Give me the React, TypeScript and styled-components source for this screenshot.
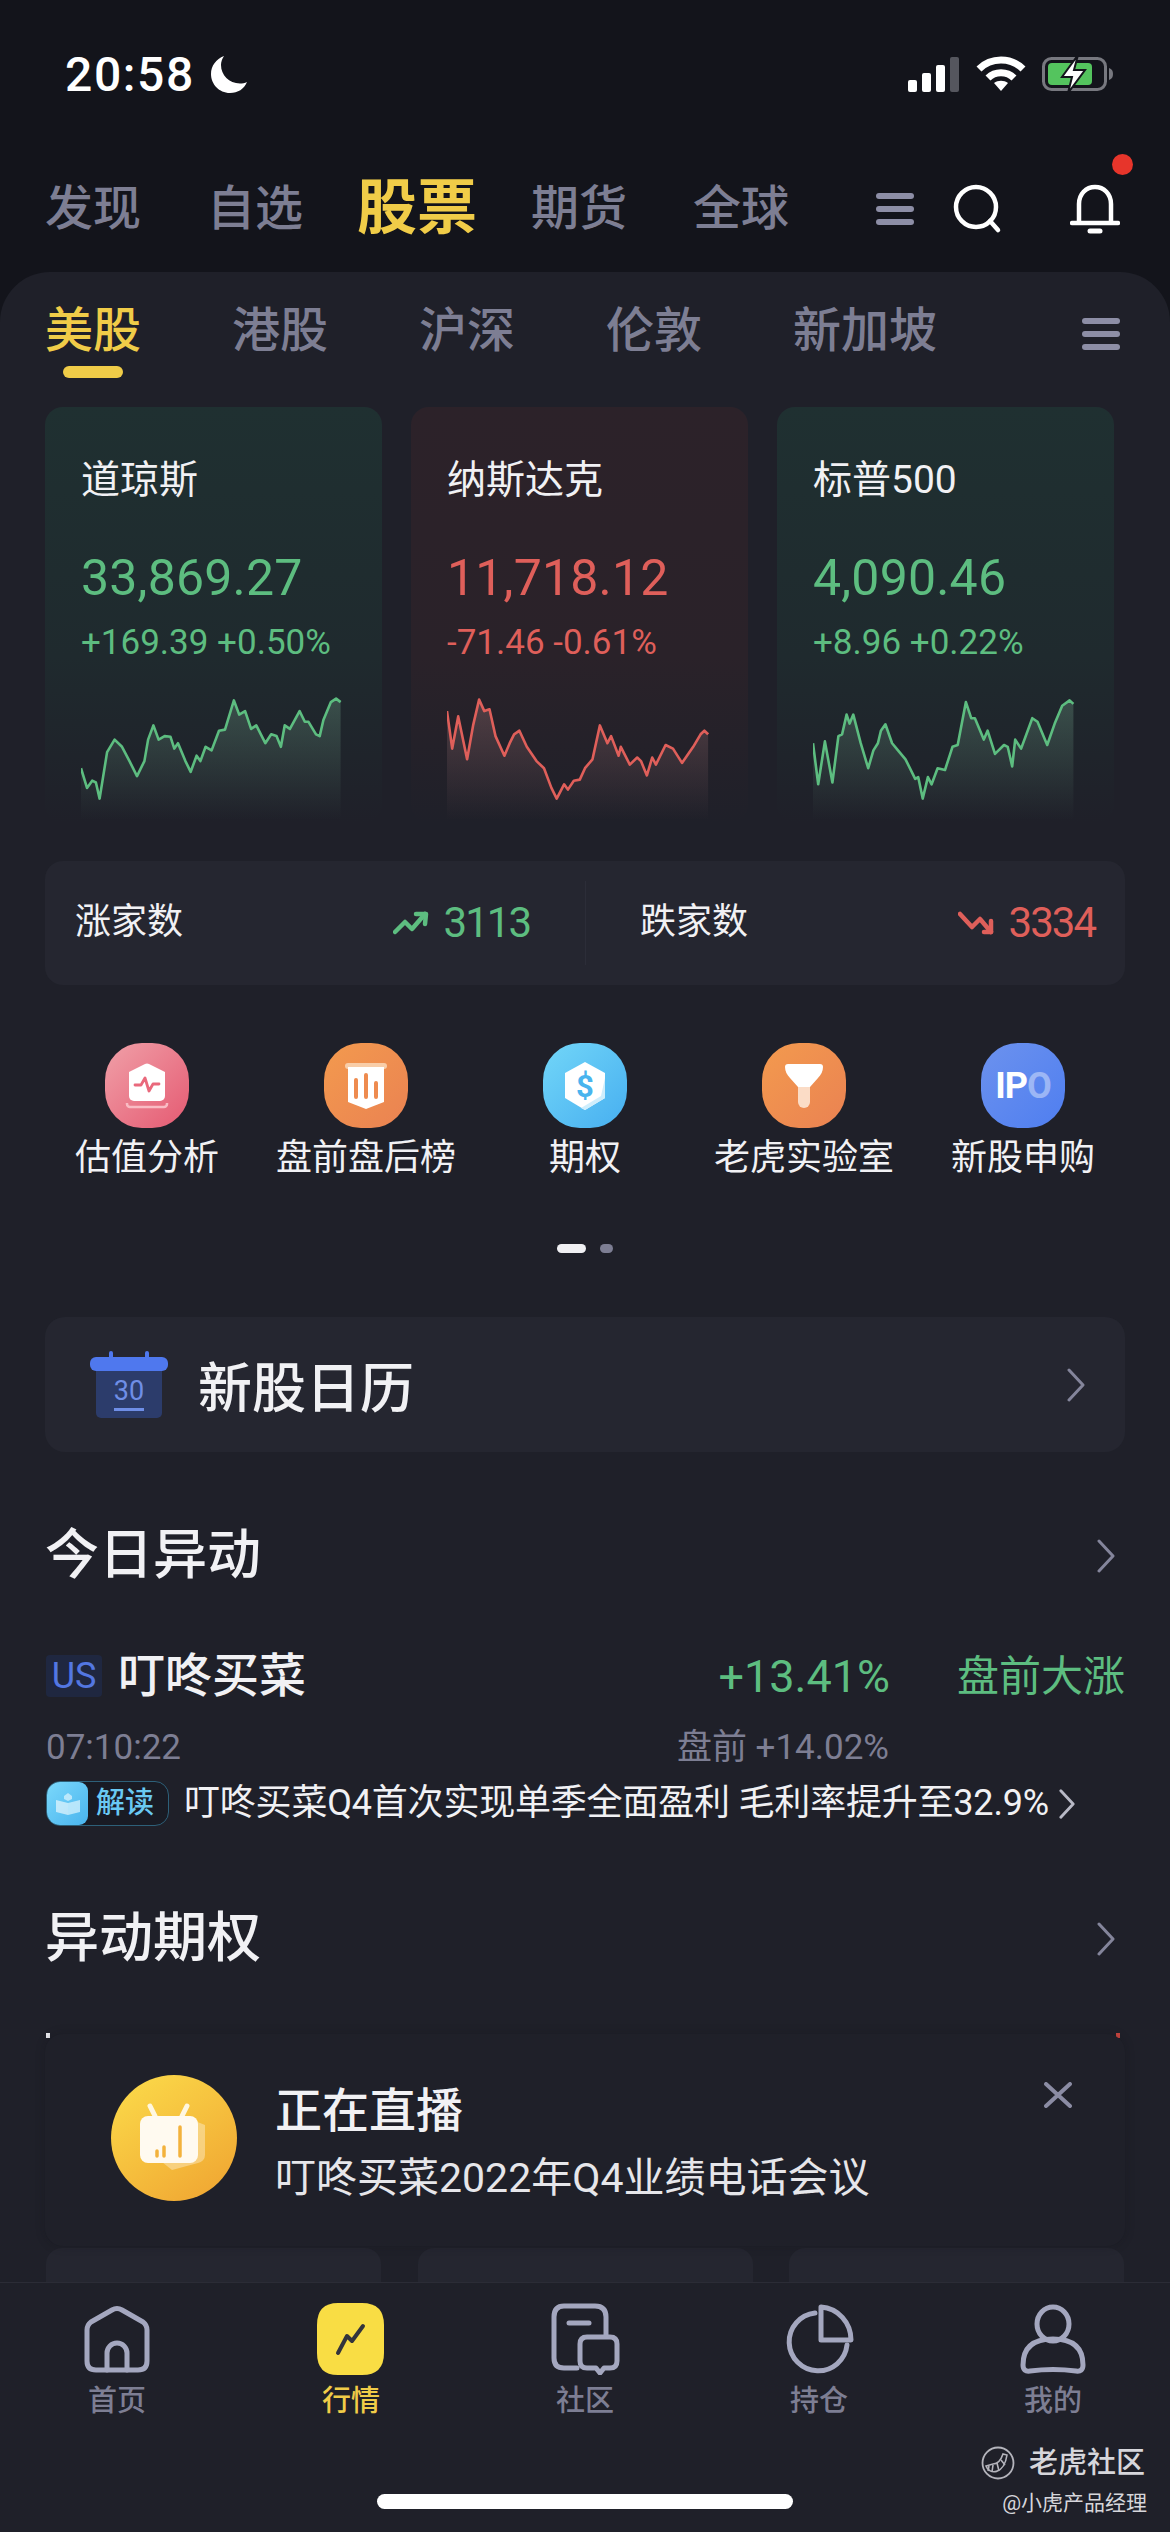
import React from 'react';
import styled, { createGlobalStyle } from 'styled-components';

const colors = {
  top: '#13141b',
  sheet: '#1f2029',
  panel: '#252630',
  text: '#f1f1f4',
  muted: '#7d7e93',
  icon: '#a4a7bf',
  yellow: '#f0cc48',
  green: '#5dbd80',
  red: '#df5f5a',
};

const Global = createGlobalStyle`
  html, body {
    margin: 0;
    padding: 0;
    background: ${colors.sheet};
  }
  * {
    box-sizing: border-box;
  }
  body {
    font-family: Roboto, "Noto Sans CJK SC", sans-serif;
    color: ${colors.text};
  }
`;

const Page = styled.div`
  position: relative;
  width: 1170px;
  height: 2532px;
  display: flex;
  flex-direction: column;
  background: ${colors.top};
  overflow: hidden;
`;

const StatusBar = styled.div`
  height: 148px;
  flex: none;
  display: flex;
  align-items: center;
  justify-content: space-between;
  padding: 0 56px 0 65px;
`;
const StatusGroup = styled.div`
  display: flex;
  align-items: center;
  gap: 16px;
`;
const Clock = styled.div`
  font-family: Roboto, sans-serif;
  font-size: 48px;
  font-weight: 500;
  letter-spacing: 1.6px;
  color: #fff;
`;

const TopNav = styled.div`
  height: 124px;
  flex: none;
  display: flex;
  align-items: center;
  padding: 0 50px 3px 45px;
`;
const TopTabs = styled.div`
  display: flex;
  align-items: center;
  gap: 66px;
  flex: 1;
`;
const TopTab = styled.div<{ $active?: boolean }>`
  font-size: ${p => (p.$active ? 60 : 48)}px;
  font-weight: ${p => (p.$active ? 700 : 500)};
  line-height: 70px;
  margin: ${p => (p.$active ? '0 -12px' : '0')};
  color: ${p => (p.$active ? colors.yellow : colors.muted)};
`;
const TopActions = styled.div`
  display: flex;
  align-items: center;
`;
const BellWrap = styled.div`
  position: relative;
  display: flex;
  margin-left: 67px;
`;
const BellDot = styled.span`
  position: absolute;
  top: -30px;
  right: -13px;
  width: 21px;
  height: 21px;
  border-radius: 50%;
  background: #e7352b;
`;
const MenuIcon = styled.div<{ $mr?: number }>`
  width: 38px;
  height: 32px;
  margin-right: ${p => p.$mr || 0}px;
  display: flex;
  flex-direction: column;
  justify-content: space-between;
  span {
    height: 6px;
    border-radius: 3px;
    background: #8d8ea6;
  }
`;

const Sheet = styled.div`
  flex: 1;
  min-height: 0;
  border-radius: 50px 50px 0 0;
  background: ${colors.sheet};
  overflow: hidden;
`;
const SubTabs = styled.div`
  height: 106px;
  display: flex;
  align-items: flex-start;
  gap: 91px;
  padding: 31px 50px 0 45px;
`;
const SubTab = styled.div<{ $active?: boolean }>`
  display: flex;
  flex-direction: column;
  align-items: center;
  font-size: 48px;
  font-weight: 500;
  line-height: 56px;
  color: ${p => (p.$active ? colors.yellow : colors.muted)};
`;
const SubMark = styled.span`
  width: 60px;
  height: 12px;
  margin-top: 7px;
  border-radius: 6px;
  background: ${colors.yellow};
`;
const SubMenu = styled.div`
  margin: 15px 0 0 auto;
`;

const IndexRow = styled.div`
  display: flex;
  gap: 29px;
  margin-top: 29px;
  padding-left: 45px;
`;
const IndexCard = styled.div<{ $up: boolean }>`
  width: 337px;
  height: 416px;
  flex: none;
  padding: 51px 0 0 36px;
  border-radius: 18px;
  background: linear-gradient(
    180deg,
    ${p => (p.$up ? '#1f3031' : '#2c2229')} 0%,
    ${p => (p.$up ? '#1f2a2e' : '#2a2229')} 60%,
    ${colors.sheet} 100%
  );
`;
const IndexName = styled.div`
  font-size: 39px;
  font-weight: 400;
  line-height: 44px;
`;
const IndexValue = styled.div<{ $up: boolean }>`
  margin-top: 45px;
  font-size: 50px;
  line-height: 62px;
  letter-spacing: 0.2px;
  color: ${p => (p.$up ? colors.green : colors.red)};
`;
const IndexChange = styled.div<{ $up: boolean }>`
  margin-top: 14px;
  font-size: 35px;
  line-height: 40px;
  color: ${p => (p.$up ? colors.green : colors.red)};
`;
const ChartSvg = styled.svg`
  display: block;
  margin-top: 32px;
  width: 262px;
  height: 125px;
`;

const Breadth = styled.div`
  height: 124px;
  margin: 38px 45px 0;
  display: grid;
  grid-template-columns: 1fr 1fr;
  border-radius: 18px;
  background: ${colors.panel};
`;
const BreadthSide = styled.div<{ $divided?: boolean }>`
  display: flex;
  align-items: center;
  justify-content: space-between;
  padding: 0 ${p => (p.$divided ? 30 : 55)}px 0 ${p => (p.$divided ? 55 : 30)}px;
  ${p => (p.$divided ? 'background: linear-gradient(#2c2d38, #2c2d38) left center / 1px 84px no-repeat;' : '')}
`;
const BreadthLabel = styled.span`
  font-size: 36px;
  line-height: 44px;
  margin-top: -3px;
`;
const BreadthValue = styled.span<{ $up: boolean }>`
  display: flex;
  align-items: center;
  gap: 15px;
  font-size: 42px;
  letter-spacing: -2px;
  line-height: 44px;
  color: ${p => (p.$up ? colors.green : colors.red)};
`;

const Shortcuts = styled.div`
  display: grid;
  grid-template-columns: repeat(5, 219px);
  justify-content: center;
  margin-top: 58px;
`;
const Shortcut = styled.div`
  display: flex;
  flex-direction: column;
  align-items: center;
`;
const ShortcutIcon = styled.div<{ $from: string; $to: string }>`
  width: 84px;
  height: 85px;
  display: flex;
  align-items: center;
  justify-content: center;
  border-radius: 44%;
  background: linear-gradient(135deg, ${p => p.$from}, ${p => p.$to});
  svg {
    display: block;
  }
`;
const ShortcutLabel = styled.div`
  margin-top: 6px;
  font-size: 36px;
  line-height: 48px;
  white-space: nowrap;
`;
const IpoMark = styled.div`
  font-family: Roboto, sans-serif;
  font-size: 36px;
  font-weight: 700;
  letter-spacing: -1px;
  color: #fff;
  span {
    opacity: 0.4;
  }
`;

const Pager = styled.div`
  display: flex;
  justify-content: center;
  gap: 14px;
  margin-top: 62px;
`;
const PagerDot = styled.span<{ $active?: boolean }>`
  width: ${p => (p.$active ? 29 : 13)}px;
  height: 9px;
  border-radius: 5px;
  background: ${p => (p.$active ? '#f0f0f3' : colors.muted)};
`;

const CalendarCard = styled.div`
  height: 135px;
  margin: 64px 45px 0;
  display: flex;
  align-items: center;
  padding: 0 40px 0 45px;
  border-radius: 20px;
  background: ${colors.panel};
`;
const CalendarTitle = styled.div`
  margin-left: 30px;
  flex: 1;
  font-size: 54px;
  font-weight: 500;
`;

const SectionHead = styled.div<{ $mt: number }>`
  margin-top: ${p => p.$mt}px;
  padding: 0 55px 0 45px;
  display: flex;
  align-items: center;
  justify-content: space-between;
  font-size: 54px;
  font-weight: 500;
  line-height: 60px;
`;

const MoverRow = styled.div<{ $mt: number }>`
  margin-top: ${p => p.$mt}px;
  padding: 0 45px 0 46px;
  display: grid;
  grid-template-columns: 1fr auto 236px;
  align-items: center;
`;
const MoverName = styled.div`
  display: flex;
  align-items: center;
  gap: 16px;
  font-size: 47px;
  font-weight: 500;
  line-height: 60px;
`;
const MarketBadge = styled.span`
  width: 56px;
  height: 42px;
  display: flex;
  align-items: center;
  justify-content: center;
  border-radius: 4px;
  font-size: 36px;
  font-weight: 400;
  color: #5377e2;
  background: #1f2740;
`;
const MoverPct = styled.div`
  font-size: 45px;
  line-height: 60px;
  margin-top: 3px;
  margin-right: -1px;
  color: ${colors.green};
`;
const MoverTag = styled.div`
  font-size: 42px;
  line-height: 60px;
  margin-top: 2px;
  text-align: right;
  white-space: nowrap;
  color: ${colors.green};
`;
const MoverMuted = styled.div`
  font-size: 35px;
  line-height: 44px;
  color: ${colors.muted};
`;

const NewsRow = styled.div`
  height: 45px;
  margin-top: 11px;
  padding-left: 46px;
  display: flex;
  align-items: center;
  font-size: 36px;
  letter-spacing: -0.2px;
  line-height: 45px;
  white-space: nowrap;
`;
const NewsPill = styled.div`
  width: 123px;
  height: 45px;
  margin-right: 15px;
  display: flex;
  align-items: center;
  border-radius: 14px;
  border: 1px solid #2d6079;
  background: #191b24;
  overflow: hidden;
`;
const NewsPillIcon = styled.span`
  width: 41px;
  height: 100%;
  display: flex;
  align-items: center;
  justify-content: center;
  border-radius: 0 9px 9px 0;
  background: linear-gradient(135deg, #7bd8fb, #49b4ee);
`;
const NewsPillText = styled.span`
  margin-left: 8px;
  font-size: 29px;
  font-weight: 500;
  letter-spacing: 0;
  color: #69c9f3;
`;

const PeekRow = styled.div`
  margin-top: 64px;
  padding: 0 50px 0 46px;
  height: 7px;
  display: flex;
  justify-content: space-between;
`;
const PeekMark = styled.span<{ $color: string }>`
  width: 4px;
  height: 5px;
  background: ${p => p.$color};
`;
const OptionRow = styled.div`
  margin-top: 208px;
  padding: 0 46px;
  display: flex;
  justify-content: space-between;
`;
const OptionCard = styled.div`
  width: 335px;
  height: 80px;
  border-radius: 16px;
  background: ${colors.panel};
`;

const LiveCard = styled.div`
  position: absolute;
  left: 45px;
  right: 45px;
  top: 2034px;
  height: 212px;
  display: flex;
  align-items: center;
  gap: 38px;
  padding: 0 0 4px 66px;
  border-radius: 18px;
  background: ${colors.sheet};
  box-shadow: 0 0 10px rgba(15, 16, 22, 0.25);
`;
const LiveText = styled.div`
  margin-top: 8px;
`;
const LiveTitle = styled.div`
  font-size: 47px;
  font-weight: 500;
  line-height: 64px;
`;
const LiveDesc = styled.div`
  margin-top: 7px;
  font-size: 41px;
  line-height: 56px;
  color: #e6e6ea;
`;
const LiveClose = styled.div`
  position: absolute;
  top: 48px;
  right: 53px;
  display: flex;
`;

const TabBar = styled.div`
  position: relative;
  height: 250px;
  flex: none;
  padding-top: 20px;
  border-top: 1px solid #2b2c36;
  background: ${colors.sheet};
`;
const Tabs = styled.div`
  display: grid;
  grid-template-columns: repeat(5, 1fr);
`;
const TabItem = styled.div<{ $active?: boolean }>`
  display: flex;
  flex-direction: column;
  align-items: center;
  font-size: 29px;
  font-weight: 500;
  line-height: 36px;
  color: ${p => (p.$active ? colors.yellow : colors.muted)};
  svg {
    display: block;
    margin-bottom: 8px;
  }
`;
const HomeBar = styled.div`
  width: 416px;
  height: 15px;
  margin: 75px auto 0;
  border-radius: 8px;
  background: #fff;
`;
const Watermark = styled.div`
  position: absolute;
  right: 23px;
  bottom: 13px;
  display: flex;
  flex-direction: column;
  align-items: flex-end;
  color: #d6d6db;
`;
const WatermarkBrand = styled.div`
  display: flex;
  align-items: center;
  gap: 14px;
  margin-right: 2px;
  font-size: 29px;
  font-weight: 500;
  line-height: 38px;
`;
const WatermarkUser = styled.div`
  margin-top: 5px;
  font-size: 21px;
  line-height: 32px;
`;

type Point = [number, number];

const dowLine: Point[] = [[110,1020],[118,1075],[125,1055],[130,1060],[135,1105],[145,975],[155,940],[165,960],[175,1000],[185,1042],[195,1000],[200,940],[207,900],[214,940],[222,930],[230,932],[235,965],[240,950],[250,1000],[257,1030],[265,985],[270,1000],[277,960],[285,970],[295,915],[303,912],[315,830],[322,870],[330,860],[338,910],[345,900],[357,950],[365,925],[372,930],[378,960],[383,900],[390,910],[403,860],[410,890],[415,890],[425,925],[430,930],[435,885],[445,835],[452,825],[458,835]];
const nasdaqLine: Point[] = [[600,860],[607,965],[615,875],[627,995],[635,900],[643,828],[650,860],[657,855],[665,930],[677,985],[684,950],[690,925],[697,915],[707,960],[720,1000],[730,1020],[740,1075],[747,1105],[757,1065],[762,1080],[770,1055],[778,1052],[785,1020],[795,995],[805,900],[815,950],[820,930],[830,985],[833,960],[845,1010],[855,990],[860,1000],[868,1040],[875,990],[880,1010],[893,955],[903,965],[915,1005],[930,960],[940,925],[945,915],[950,925]];
const spxLine: Point[] = [[1091,950],[1098,1065],[1107,945],[1117,1060],[1125,930],[1130,925],[1136,870],[1140,895],[1145,870],[1155,950],[1165,1020],[1172,970],[1178,950],[1182,915],[1188,897],[1197,950],[1205,970],[1215,995],[1228,1050],[1232,1045],[1238,1105],[1245,1045],[1250,1065],[1258,1020],[1268,1025],[1278,960],[1285,955],[1296,835],[1303,880],[1308,880],[1320,940],[1325,915],[1335,980],[1347,955],[1352,960],[1358,1015],[1362,940],[1370,965],[1385,880],[1392,890],[1405,955],[1415,895],[1425,845],[1435,830],[1440,840]];

const indices = [
  { name: '道琼斯', value: '33,869.27', change: '+169.39 +0.50%', up: true, line: dowLine, id: 'dow' },
  { name: '纳斯达克', value: '11,718.12', change: '-71.46 -0.61%', up: false, line: nasdaqLine, id: 'nas' },
  { name: '标普500', value: '4,090.46', change: '+8.96 +0.22%', up: true, line: spxLine, id: 'spx' },
];

// points are in the stretched coordinates of the crop, mapped to a 262x125 box
const Sparkline = ({ id, line, up }: { id: string; line: Point[]; up: boolean }) => {
  const x0 = line[0][0];
  const pts = line.map(([x, y]) => [((x - x0) * 0.746).toFixed(1), ((y - 815) / 2.8).toFixed(1)]);
  const d = pts.map(p => p.join(',')).join(' ');
  const last = pts[pts.length - 1][0];
  const color = up ? colors.green : colors.red;
  return (
    <ChartSvg viewBox="0 0 262 125">
      <defs>
        <linearGradient id={id} x1="0" y1="0" x2="0" y2="1">
          <stop offset="0" stopColor={up ? '#7fb598' : '#c08a8c'} stopOpacity="0.28" />
          <stop offset="1" stopColor={up ? '#7fb598' : '#c08a8c'} stopOpacity="0" />
        </linearGradient>
      </defs>
      <polygon points={`0,125 ${d} ${last},125`} fill={`url(#${id})`} />
      <polyline points={d} fill="none" stroke={color} strokeWidth="2.6" strokeLinejoin="round" />
    </ChartSvg>
  );
};

const Menu = ({ mr }: { mr?: number }) => (
  <MenuIcon $mr={mr}>
    <span />
    <span />
    <span />
  </MenuIcon>
);

const Chevron = ({ w = 18, h = 34 }: { w?: number; h?: number }) => (
  <svg width={w} height={h} viewBox="0 0 18 34" fill="none">
    <path d="M2 2l14 15L2 32" stroke="#84859b" strokeWidth="3" strokeLinecap="round" strokeLinejoin="round" />
  </svg>
);

const Moon = () => (
  <svg width="36" height="38" viewBox="0 0 36 38">
    <path d="M13 1C5 4 0 11 0 19c0 10 8 19 19 19 8 0 14-4 17-11-2 1-5 1.500-7 1.500C18 28.500 10 20 10 10c0-3 1-6 3-9z" fill="#fff" />
  </svg>
);

const SignalIcon = () => (
  <svg width="52" height="35" viewBox="0 0 52 35">
    <rect x="0" y="23" width="9" height="12" rx="2" fill="#fff" />
    <rect x="14" y="16" width="9" height="19" rx="2" fill="#fff" />
    <rect x="28" y="8" width="9" height="27" rx="2" fill="#fff" />
    <rect x="42" y="0" width="9" height="35" rx="2" fill="#55565e" />
  </svg>
);

const WifiIcon = () => (
  <svg width="50" height="36" viewBox="0 0 50 36" fill="none" stroke="#fff" strokeWidth="7">
    <path d="M3 13C15 1 35 1 47 13" />
    <path d="M12 22c7-7 19-7 26 0" />
    <path d="M25 35l-7-8c4-3 10-3 14 0z" fill="#fff" stroke="none" />
  </svg>
);

const BatteryIcon = () => (
  <svg width="72" height="38" viewBox="0 0 72 38">
    <rect x="1.500" y="3.500" width="62" height="31" rx="8" fill="none" stroke="#77787f" strokeWidth="3" />
    <rect x="6" y="8" width="44" height="22" rx="4" fill="#54c45e" />
    <path d="M67 13c3 1 4 3 4 6s-1 5-4 6z" fill="#77787f" />
    <path d="M36 0L20 22h10l-4 16 17-23H32z" fill="#fff" stroke={colors.top} strokeWidth="2" />
  </svg>
);

const SearchIcon = () => (
  <svg width="50" height="50" viewBox="0 0 50 50" fill="none" stroke="#fff" strokeWidth="4.5" strokeLinecap="round">
    <circle cx="23" cy="23" r="20" />
    <path d="M37 37l8 9" />
  </svg>
);

const BellIcon = () => (
  <svg width="50" height="50" viewBox="0 0 50 50" fill="none" stroke="#fff" strokeWidth="4.5" strokeLinecap="round" strokeLinejoin="round">
    <path d="M9 38V20C9 10 16 3 25 3s16 7 16 17v18" />
    <path d="M2 39h46" />
    <path d="M20 47h10" strokeWidth="5" />
  </svg>
);

const TrendUp = () => (
  <svg width="36" height="24" viewBox="0 0 36 24" fill="none" stroke={colors.green} strokeWidth="4.500" strokeLinecap="round" strokeLinejoin="round">
    <path d="M2 21l10-10 7 7L32 3" />
    <path d="M23 3h10l-1 10" />
  </svg>
);

const TrendDown = () => (
  <svg width="36" height="24" viewBox="0 0 36 24" fill="none" stroke={colors.red} strokeWidth="4.500" strokeLinecap="round" strokeLinejoin="round">
    <path d="M2 3l12 13 8-8 11 13" />
    <path d="M33 10v11h-7" />
  </svg>
);

const ValuationGlyph = () => (
  <svg width="84" height="85" viewBox="0 0 84 85" fill="none">
    <path d="M24 29l16-8a5 5 0 0 1 4 0l16 8v24a5 5 0 0 1-5 5H29a5 5 0 0 1-5-5z" fill="#fff" />
    <path d="M30 42h6l4-7 4 13 4-7h6" stroke="#e9697c" strokeWidth="2.800" strokeLinecap="round" strokeLinejoin="round" />
    <path d="M22 60v1a3 3 0 0 0 3 3h34a3 3 0 0 0 3-3v-1" stroke="#f9bcc4" strokeWidth="2.500" />
  </svg>
);

const RankGlyph = () => (
  <svg width="84" height="85" viewBox="0 0 84 85" fill="none">
    <rect x="21" y="20" width="42" height="6" rx="3" fill="#f8cda8" />
    <path d="M24 24h36v35L42 66l-18-7z" fill="#fff" />
    <path d="M32 37v17M42 32v22M52 40v14" stroke="#ee8b4f" strokeWidth="4" strokeLinecap="round" />
  </svg>
);

const OptionGlyph = () => (
  <svg width="84" height="85" viewBox="0 0 84 85">
    <path d="M42 19l20 11v25L42 67 22 55V30z" fill="#fff" />
    <path d="M62 35v20L42 67l-4-2 20-12z" fill="#cfeefc" />
    <text x="42" y="54" textAnchor="middle" fontFamily="Roboto, sans-serif" fontSize="31" fontWeight="700" fill="#49b4ee">$</text>
  </svg>
);

const LabGlyph = () => (
  <svg width="84" height="85" viewBox="0 0 84 85">
    <path d="M36 42h12v17a6 6 0 0 1-12 0z" fill="#fbdcc6" />
    <path d="M26 21h32a3 3 0 0 1 3 3c0 4-2 8-5 11l-8 9H36l-8-9c-3-3-5-7-5-11a3 3 0 0 1 3-3z" fill="#fff" />
  </svg>
);

const CalendarIcon = () => (
  <svg width="78" height="68" viewBox="0 0 78 68">
    <rect x="19" y="0" width="4" height="10" rx="2" fill="#4f78ee" />
    <rect x="55" y="0" width="4" height="10" rx="2" fill="#4f78ee" />
    <rect x="6" y="12" width="66" height="55" rx="5" fill="#2c3c6b" />
    <rect x="0" y="6" width="78" height="14" rx="6" fill="#4f78ee" />
    <text x="39" y="49" textAnchor="middle" fontFamily="Roboto, sans-serif" fontSize="27" fill="#6f8ee6">30</text>
    <rect x="24" y="57" width="30" height="3" fill="#6f8ee6" />
  </svg>
);

const BookGlyph = () => (
  <svg width="26" height="24" viewBox="0 0 26 24">
    <path d="M13 1l-4 3v3l4 2 4-2V4z" fill="#cfeffd" opacity="0.8" />
    <path d="M1 8l12 3v12L1 20z" fill="#fff" opacity="0.6" />
    <path d="M25 8l-12 3v12l12-3z" fill="#d6f2fe" opacity="0.75" />
  </svg>
);

const CloseIcon = () => (
  <svg width="28" height="26" viewBox="0 0 28 26" fill="none" stroke="#8b8ca4" strokeWidth="4" strokeLinecap="round">
    <path d="M2 2l24 22M26 2L2 24" />
  </svg>
);

const LiveBadge = () => (
  <svg width="126" height="126" viewBox="0 0 126 126" style={{ flex: 'none' }}>
    <defs>
      <linearGradient id="liveFill" x1="0.15" y1="0" x2="0.85" y2="1">
        <stop offset="0" stopColor="#fbd949" />
        <stop offset="1" stopColor="#f0a632" />
      </linearGradient>
    </defs>
    <circle cx="63" cy="63" r="63" fill="url(#liveFill)" />
    <path d="M84 46l10 4v30a8 8 0 0 1-7 8l-26 7-10-8z" fill="#fff" opacity="0.35" />
    <path d="M44 41l-5-10M71 41l5-10" stroke="#fff7e0" strokeWidth="5" strokeLinecap="round" />
    <rect x="29" y="41" width="58" height="47" rx="8" fill="#fffaf0" />
    <path d="M46 76v5M53 72v9M69 52v29" stroke="#f3b23c" strokeWidth="3.500" strokeLinecap="round" />
  </svg>
);

const iconProps = {
  width: 70,
  height: 72,
  viewBox: '0 0 70 72',
  fill: 'none',
  stroke: colors.icon,
  strokeWidth: 5,
  strokeLinejoin: 'round' as const,
  strokeLinecap: 'round' as const,
};

const HomeTabIcon = () => (
  <svg {...iconProps}>
    <path d="M5 58V27q0-5 4-8L30 7q5-3 10 0l21 12q4 3 4 8v31q0 9-9 9H14q-9 0-9-9z" />
    <path d="M25 67V50a10 10 0 0 1 20 0v17" />
  </svg>
);

const MarketTabIcon = () => (
  <svg width="70" height="72" viewBox="0 0 70 72" fill="none">
    <path d="M22 0h24q22 0 22 22v28q0 22-22 22H22Q1 72 1 50V22Q1 0 22 0z" fill="#f9dd44" />
    <path d="M22 50l9-17 5 5 11-15" stroke="#33343c" strokeWidth="4" strokeLinejoin="round" strokeLinecap="round" />
  </svg>
);

const CommunityTabIcon = () => (
  <svg {...iconProps}>
    <path d="M27 65H14Q4 65 4 55V14Q4 3 14 3h31q11 0 11 11v19" />
    <path d="M19 20h20" />
    <path d="M37 34h23q7 0 7 7v17q0 7-7 7h-6l-4 5-4-5H37q-7 0-7-7V41q0-7 7-7z" />
  </svg>
);

const PortfolioTabIcon = () => (
  <svg {...iconProps}>
    <path d="M31 10a29 29 0 1 0 32 32" />
    <path d="M37 4a32 33 0 0 1 30 33H37z" />
  </svg>
);

const ProfileTabIcon = () => (
  <svg {...iconProps}>
    <ellipse cx="35" cy="21" rx="16" ry="17" />
    <path d="M5 62q0-26 30-26t30 26q0 7-7 6-23-3-46 0-7 1-7-6z" />
  </svg>
);

const TigerMark = () => (
  <svg width="34" height="34" viewBox="0 0 34 34" fill="none" stroke="#b4b4bc" strokeWidth="1.800">
    <circle cx="17" cy="17" r="15.500" />
    <path d="M5 20c3 9 18 9 21-11l-4-1c-2 6-5 10-10 10z" strokeWidth="1.600" />
    <path d="M8 20l-1 5M12 19l-1 7M16 17l2 8M20 14l4 5" strokeWidth="1.600" />
  </svg>
);

const shortcuts = [
  { label: '估值分析', from: '#f0a0a8', to: '#e55a72', glyph: <ValuationGlyph /> },
  { label: '盘前盘后榜', from: '#f39a4e', to: '#ea8252', glyph: <RankGlyph /> },
  { label: '期权', from: '#72d6f8', to: '#47aff0', glyph: <OptionGlyph /> },
  { label: '老虎实验室', from: '#f39a4e', to: '#ea8252', glyph: <LabGlyph /> },
  {
    label: '新股申购',
    from: '#6c92ee',
    to: '#4f7ef0',
    glyph: (
      <IpoMark>
        IP<span>O</span>
      </IpoMark>
    ),
  },
];

const tabs = [
  { label: '首页', icon: <HomeTabIcon /> },
  { label: '行情', icon: <MarketTabIcon />, active: true },
  { label: '社区', icon: <CommunityTabIcon /> },
  { label: '持仓', icon: <PortfolioTabIcon /> },
  { label: '我的', icon: <ProfileTabIcon /> },
];

const topTabs = ['发现', '自选', '股票', '期货', '全球'];
const subTabs = ['美股', '港股', '沪深', '伦敦', '新加坡'];

const App = () => (
  <Page>
    <Global />
    <StatusBar>
      <StatusGroup>
        <Clock>20:58</Clock>
        <Moon />
      </StatusGroup>
      <StatusGroup>
        <SignalIcon />
        <WifiIcon />
        <BatteryIcon />
      </StatusGroup>
    </StatusBar>

    <TopNav>
      <TopTabs>
        {topTabs.map(t => (
          <TopTab key={t} $active={t === '股票'}>{t}</TopTab>
        ))}
      </TopTabs>
      <TopActions>
        <Menu mr={39} />
        <SearchIcon />
        <BellWrap>
          <BellIcon />
          <BellDot />
        </BellWrap>
      </TopActions>
    </TopNav>

    <Sheet>
      <SubTabs>
        {subTabs.map(t => (
          <SubTab key={t} $active={t === '美股'}>
            {t}
            {t === '美股' && <SubMark />}
          </SubTab>
        ))}
        <SubMenu>
          <Menu />
        </SubMenu>
      </SubTabs>

      <IndexRow>
        {indices.map(i => (
          <IndexCard key={i.id} $up={i.up}>
            <IndexName>{i.name}</IndexName>
            <IndexValue $up={i.up}>{i.value}</IndexValue>
            <IndexChange $up={i.up}>{i.change}</IndexChange>
            <Sparkline id={i.id} line={i.line} up={i.up} />
          </IndexCard>
        ))}
      </IndexRow>

      <Breadth>
        <BreadthSide>
          <BreadthLabel>涨家数</BreadthLabel>
          <BreadthValue $up>
            <TrendUp />
            3113
          </BreadthValue>
        </BreadthSide>
        <BreadthSide $divided>
          <BreadthLabel>跌家数</BreadthLabel>
          <BreadthValue $up={false}>
            <TrendDown />
            3334
          </BreadthValue>
        </BreadthSide>
      </Breadth>

      <Shortcuts>
        {shortcuts.map(s => (
          <Shortcut key={s.label}>
            <ShortcutIcon $from={s.from} $to={s.to}>{s.glyph}</ShortcutIcon>
            <ShortcutLabel>{s.label}</ShortcutLabel>
          </Shortcut>
        ))}
      </Shortcuts>

      <Pager>
        <PagerDot $active />
        <PagerDot />
      </Pager>

      <CalendarCard>
        <CalendarIcon />
        <CalendarTitle>新股日历</CalendarTitle>
        <Chevron />
      </CalendarCard>

      <SectionHead $mt={74}>
        今日异动
        <Chevron />
      </SectionHead>

      <MoverRow $mt={58}>
        <MoverName>
          <MarketBadge>US</MarketBadge>
          叮咚买菜
        </MoverName>
        <MoverPct>+13.41%</MoverPct>
        <MoverTag>盘前大涨</MoverTag>
      </MoverRow>
      <MoverRow $mt={19}>
        <MoverMuted>07:10:22</MoverMuted>
        <MoverMuted>盘前 +14.02%</MoverMuted>
      </MoverRow>
      <NewsRow>
        <NewsPill>
          <NewsPillIcon>
            <BookGlyph />
          </NewsPillIcon>
          <NewsPillText>解读</NewsPillText>
        </NewsPill>
        叮咚买菜Q4首次实现单季全面盈利 毛利率提升至32.9%
        <svg width="16" height="30" viewBox="0 0 18 34" fill="none" style={{ marginLeft: 10 }}>
          <path d="M2 2l14 15L2 32" stroke="#b8b9c6" strokeWidth="3.200" strokeLinecap="round" strokeLinejoin="round" />
        </svg>
      </NewsRow>

      <SectionHead $mt={83}>
        异动期权
        <Chevron />
      </SectionHead>

      <PeekRow>
        <PeekMark $color="#e8e8ec" />
        <PeekMark $color="#c9453f" />
      </PeekRow>
      <OptionRow>
        <OptionCard />
        <OptionCard />
        <OptionCard />
      </OptionRow>
    </Sheet>

    <LiveCard>
      <LiveBadge />
      <LiveText>
        <LiveTitle>正在直播</LiveTitle>
        <LiveDesc>叮咚买菜2022年Q4业绩电话会议</LiveDesc>
      </LiveText>
      <LiveClose>
        <CloseIcon />
      </LiveClose>
    </LiveCard>

    <TabBar>
      <Tabs>
        {tabs.map(t => (
          <TabItem key={t.label} $active={t.active}>
            {t.icon}
            {t.label}
          </TabItem>
        ))}
      </Tabs>
      <HomeBar />
      <Watermark>
        <WatermarkBrand>
          <TigerMark />
          老虎社区
        </WatermarkBrand>
        <WatermarkUser>@小虎产品经理</WatermarkUser>
      </Watermark>
    </TabBar>
  </Page>
);

export default App;
